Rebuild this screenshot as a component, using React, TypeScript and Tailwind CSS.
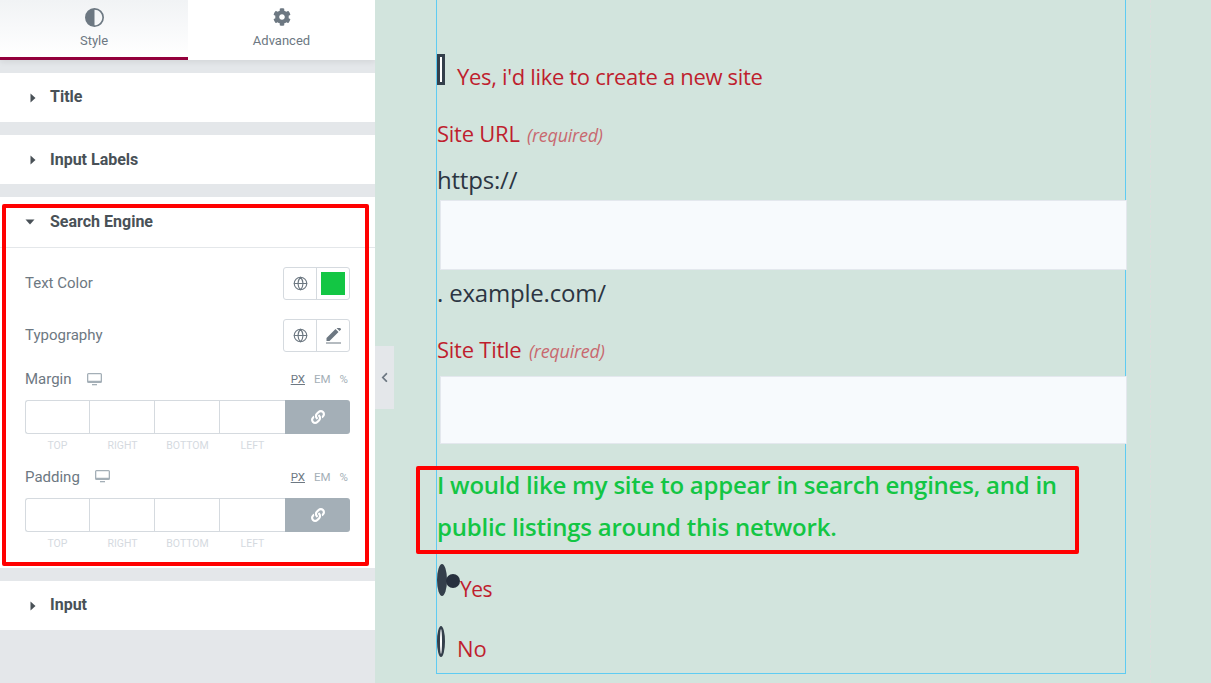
import React from 'react';
import { FaCog, FaLink, FaChevronLeft } from 'react-icons/fa';
import { Globe } from 'lucide-react';

const Caret = ({ open }: { open?: boolean }) =>
  open ? (
    <svg width="10" height="6" viewBox="0 0 10 6" className="fill-[#495157]">
      <path d="M0.5 0.5h9L5 5.5z" />
    </svg>
  ) : (
    <svg width="6" height="10" viewBox="0 0 6 10" className="fill-[#495157]">
      <path d="M0.5 0.5v9L5.5 5z" />
    </svg>
  );

const Section = ({ title, offset = '-mt-[2px]' }: { title: string; offset?: string }) => (
  <div className="h-[49px] bg-white flex items-center pl-[30px] gap-[14px] text-[16px] font-bold text-[#495157]">
    <Caret />
    <span className={offset}>{title}</span>
  </div>
);

const Desktop = () => (
  <svg width="15" height="13" viewBox="0 0 15 13" className="fill-[#a4afb7]">
    <path d="M1.5 0h12A1.5 1.5 0 0 1 15 1.500v7A1.500 1.500 0 0 1 13.500 10h-12A1.500 1.500 0 0 1 0 8.500v-7A1.500 1.500 0 0 1 1.500 0zM1.300 1.300v6.500h12.400V1.300z" />
    <rect x="5" y="11" width="5" height="1.300" />
  </svg>
);

const PickerRow = ({ label, children, h }: { label: string; children: React.ReactNode; h: string }) => (
  <div className="flex items-center justify-between">
    <span className="text-[15px] text-[#6d7882]">{label}</span>
    <div className={`flex w-[67px] border border-[#d5dadf] rounded-[3px] ${h}`}>
      <div className="w-[33px] flex items-center justify-center border-r border-[#d5dadf]">
        <Globe size={15} strokeWidth={1.8} className="text-[#6d7882]" />
      </div>
      {children}
    </div>
  </div>
);

const Dimensions = ({ label, iconGap }: { label: string; iconGap: string }) => (
  <div>
    <div className="flex items-center justify-between h-[20px]">
      <div className={`flex items-center ${iconGap}`}>
        <span className="text-[15px] text-[#6d7882]">{label}</span>
        <Desktop />
      </div>
      <div className="flex gap-[9px] text-[11.500px] text-[#a4afb7] pr-[2px] pt-[2px]">
        <span className="text-[#6d7882] underline">PX</span>
        <span>EM</span>
        <span>%</span>
      </div>
    </div>
    <div className="flex mt-[11px] h-[34px]">
      <div className="flex-1 flex border border-r-0 border-[#d5dadf] rounded-l-[3px]">
        <div className="w-[64px] border-r border-[#d5dadf]" />
        <div className="w-[65px] border-r border-[#d5dadf]" />
        <div className="w-[65px] border-r border-[#d5dadf]" />
        <div className="flex-1" />
      </div>
      <div className="w-[65px] bg-[#a4afb7] rounded-r-[3px] flex items-center justify-center">
        <FaLink size={14} className="text-white" />
      </div>
    </div>
    <div className="flex mt-[4px] text-[10.500px] text-[#d5dadf] text-center">
      <span className="w-[65px]">TOP</span>
      <span className="w-[65px]">RIGHT</span>
      <span className="w-[65px]">BOTTOM</span>
      <span className="w-[65px]">LEFT</span>
    </div>
  </div>
);

const Panel = () => (
  <div className="w-[375px] h-full shrink-0 bg-[#e4e7ea] font-['Roboto',sans-serif] shadow-[1px_0_4px_rgba(0,0,0,0.12)] relative">
    <div className="flex h-[60px] bg-white shadow-[0_2px_6px_rgba(0,0,0,0.08)]">
      <div className="w-[188px] flex flex-col items-center border-b-[3px] border-[#93003c] bg-gradient-to-b from-[#f1f3f5] to-white text-[#6d7882]">
        <svg width="19" height="19" viewBox="0 0 19 19" className="mt-[8px] fill-[#6d7882]">
          <path d="M9.500 0a9.500 9.500 0 1 0 0 19a9.500 9.500 0 0 0 0-19zM9.500 1.700c4.300 0 7.800 3.500 7.800 7.800s-3.500 7.800-7.800 7.800z" fillRule="evenodd" />
        </svg>
        <span className="text-[13px] leading-[14px] mt-[7px]">Style</span>
      </div>
      <div className="flex-1 flex flex-col items-center text-[#6d7882]">
        <FaCog size={18} className="mt-[8px]" />
        <span className="text-[13px] leading-[14px] mt-[8px]">Advanced</span>
      </div>
    </div>
    <div className="flex flex-col pt-[13px] gap-[13px]">
      <Section title="Title" />
      <Section title="Input Labels" offset="mt-0" />
      <div className="bg-white h-[371px]">
        <div className="h-[51px] flex items-center pl-[25px] gap-[15px] text-[16px] font-bold text-[#495157] border-b border-[#e4e7ea] pb-[1px]">
          <Caret open />
          <span>Search Engine</span>
        </div>
        <div className="px-[25px] pt-[19px]">
          <PickerRow label="Text Color" h="h-[33px]">
            <div className="flex-1 p-[4px]">
              <div className="w-full h-full bg-[#13c644]" />
            </div>
          </PickerRow>
          <div className="mt-[19px]">
            <PickerRow label="Typography" h="h-[33px]">
              <div className="flex-1 flex items-center justify-center">
                <svg width="15" height="16" viewBox="0 0 15 16" className="fill-[#6d7882]">
                  <path d="M0.500 11.500L9.500 2.500l3 3-9 9H0.500zM10.500 1.500L11.800 0.200a0.700 0.700 0 0 1 1 0l2 2a0.700 0.700 0 0 1 0 1L13.500 4.500z" transform="translate(0 -1.500)" />
                  <rect x="0" y="14.500" width="15" height="1" />
                </svg>
              </div>
            </PickerRow>
          </div>
          <div className="mt-[17px]">
            <Dimensions label="Margin" iconGap="gap-[15px]" />
          </div>
          <div className="mt-[13px]">
            <Dimensions label="Padding" iconGap="gap-[15px]" />
          </div>
        </div>
      </div>
      <Section title="Input" />
    </div>
    {/* red annotation */}
    <div className="absolute left-[2px] top-[204px] w-[367px] h-[362px] border-[4px] border-[#ff0000] rounded-[2px]" />
  </div>
);

const Canvas = () => (
  <div className="flex-1 h-full bg-[#d2e4dd] relative font-['Open_Sans',sans-serif] overflow-hidden">
    {/* collapse handle */}
    <div className="absolute left-0 top-[346px] w-[19px] h-[63px] bg-[#e4e7ea] flex items-center justify-center">
      <FaChevronLeft size={11} className="text-[#6d7882]" />
    </div>
    <div className="absolute left-[775px] top-0 bottom-0 border-l border-dashed border-[#dcdfde]" />
    <div className="ml-[61px] w-[690px] h-[674px] border-x border-b border-[#5fcbf2] relative">
      <div className="pt-[54px] flex items-start text-[#bf1e2e] text-[22px]">
        <div className="w-[8px] h-[31px] border-[3px] border-[#343f4b] bg-white shrink-0" />
        <span className="ml-[12px] mt-[7px] leading-[30px] tracking-[-0.32px]">Yes, i'd like to create a new site</span>
      </div>
      <div className="mt-[27px] h-[30px] leading-[30px] text-[#bf1e2e] text-[22px] tracking-[-0.25px]">
        Site URL <em className="ml-[2px] text-[18px] text-[#c8696f] tracking-[-0.25px]">(required)</em>
      </div>
      <div className="mt-[17px] leading-[30px] text-[#2c3542] text-[24px] tracking-[-0.2px]">https://</div>
      <div className="ml-[3px] mt-[5px] h-[70px] w-[687px] bg-[#f7fafd] border border-[#e4e8ee]" />
      <div className="mt-[8px] leading-[30px] text-[#2c3542] text-[24px] tracking-[-0.2px]">. example.com/</div>
      <div className="mt-[26px] h-[30px] leading-[30px] text-[#bf1e2e] text-[22px] tracking-[-0.25px]">
        Site Title <em className="ml-[2px] text-[18px] text-[#c8696f] tracking-[-0.25px]">(required)</em>
      </div>
      <div className="ml-[3px] mt-[12px] h-[68px] w-[687px] bg-[#f7fafd] border border-[#e4e8ee]" />
      <div className="mt-[20px] text-[24px] leading-[42px] font-semibold text-[#13c644] tracking-[-0.23px]">
        I would like my site to appear in search engines, and in public listings around this network.
      </div>
      <div className="mt-[16px] flex items-start h-[32px] relative">
        <div className="w-[10px] h-[32px] rounded-[50%] bg-[#343f4b] shrink-0" />
        <div className="w-[14px] h-[14px] rounded-full bg-[#27303e] absolute left-[9px] top-[8px] mt-[2px]" />
        <span className="ml-[13px] mt-[10px] leading-[30px] text-[#bf1e2e] text-[21px] tracking-[-0.5px]">Yes</span>
      </div>
      <div className="mt-[30px] flex items-start h-[32px]">
        <div className="w-[8px] h-[31px] rounded-[50%] border-[3px] border-[#343f4b] bg-white shrink-0" />
        <span className="ml-[12px] mt-[7px] leading-[30px] text-[#bf1e2e] text-[22px]">No</span>
      </div>
      {/* red annotation */}
      <div className="absolute left-[-21px] top-[466px] w-[663px] h-[88px] border-[4px] border-[#ff0000] rounded-[2px]" />
    </div>
  </div>
);

export default function App() {
  return (
    <div className="flex w-[1211px] h-[683px] overflow-hidden">
      <Panel />
      <Canvas />
    </div>
  );
}
